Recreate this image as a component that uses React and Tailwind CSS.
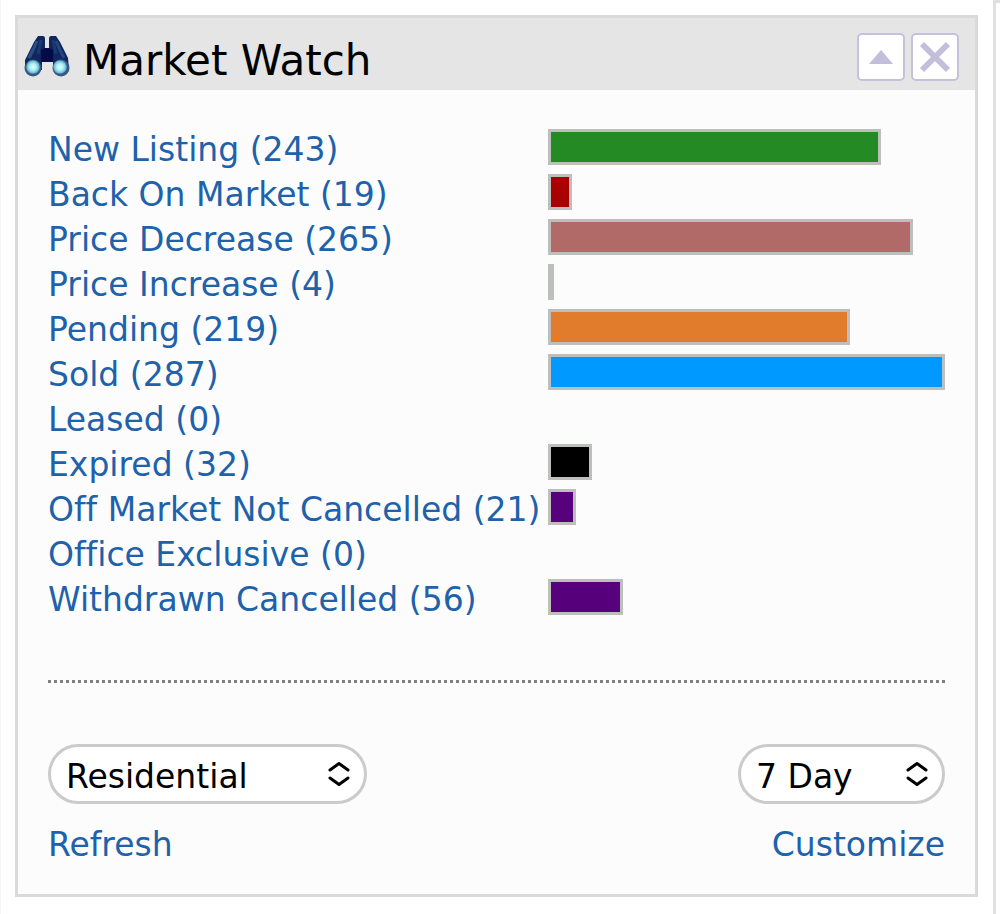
import { useState } from 'react'

const statuses = [
  { label: 'New Listing', count: 243, color: 'bg-[#248a24]' },
  { label: 'Back On Market', count: 19, color: 'bg-[#a90000]' },
  { label: 'Price Decrease', count: 265, color: 'bg-[#b16a68]' },
  { label: 'Price Increase', count: 4, color: 'bg-[#bac1bb]' },
  { label: 'Pending', count: 219, color: 'bg-[#e07c2c]' },
  { label: 'Sold', count: 287, color: 'bg-[#0099ff]' },
  { label: 'Leased', count: 0, color: 'bg-gray-500' },
  { label: 'Expired', count: 32, color: 'bg-black' },
  { label: 'Off Market Not Cancelled', count: 21, color: 'bg-[#57007b]' },
  { label: 'Office Exclusive', count: 0, color: 'bg-gray-500' },
  { label: 'Withdrawn Cancelled', count: 56, color: 'bg-[#57007b]' },
]

const max = Math.max(...statuses.map((s) => s.count))

function Binoculars() {
  return (
    <svg viewBox="0 0 46 42" className="w-[46px] h-[42px] shrink-0" aria-hidden="true">
      <defs>
        <radialGradient id="lens" cx="0.5" cy="0.5" r="0.5">
          <stop offset="0" stopColor="#e4ffff" />
          <stop offset="0.5" stopColor="#a9eef5" />
          <stop offset="0.85" stopColor="#6bbccd" />
          <stop offset="1" stopColor="#3f7a9f" />
        </radialGradient>
      </defs>
      <path d="M14 0 H19 Q21 0 21 3 V12 H25 V3 Q25 0 27 0 H32 L36 6 L40 14 L44 22 L45 34 L29 34 V26 H18 V34 L1 34 L1 24 L6 14 L10 6 Z" fill="#10265c" />
      <path d="M13 5 L9 14 L5 22" stroke="#2b5089" strokeWidth="3" fill="none" />
      <path d="M32 5 L36 14 L40 22" stroke="#244680" strokeWidth="3" fill="none" />
      <path d="M17 4 L14 18 M29 4 L32 18" stroke="#1a3a74" strokeWidth="3" />
      <path d="M17 14 L21 12 H25 L29 14 V26 H17 Z" fill="#050b48" />
      <circle cx="9" cy="32" r="8.5" fill="#3a5688" />
      <circle cx="37" cy="32" r="8.5" fill="#3a5688" />
      <circle cx="9" cy="31" r="7" fill="url(#lens)" />
      <circle cx="36" cy="31" r="7" fill="url(#lens)" />
    </svg>
  )
}

function HeaderButton({ label, children }) {
  return (
    <button
      type="button"
      aria-label={label}
      className="w-[48px] h-[48px] bg-white border-2 border-[#c6c0df] rounded-[5px] flex items-center justify-center"
    >
      {children}
    </button>
  )
}

function Select({ label, options, className }) {
  const [value, setValue] = useState(options[0])

  return (
    <div className={`relative ${className}`}>
      <select
        aria-label={label}
        value={value}
        onChange={(e) => setValue(e.target.value)}
        className="appearance-none w-full h-[60px] pl-[15px] pr-12 pt-[6px] rounded-full border-3 border-[#cbcbcb] bg-white text-black"
      >
        {options.map((o) => (
          <option key={o}>{o}</option>
        ))}
      </select>
      <svg
        viewBox="0 0 24 26"
        className="absolute right-4 top-[17px] w-6 h-[26px] pointer-events-none"
        fill="none"
        stroke="#000"
        strokeWidth="3"
        strokeLinecap="round"
        strokeLinejoin="round"
        aria-hidden="true"
      >
        <path d="M3 9 L12 2.5 L21 9 M3 17 L12 23.5 L21 17" />
      </svg>
    </div>
  )
}

export default function App() {
  return (
    <div className="min-h-screen flex bg-white border-l border-[#f5f5f5] font-['Verdana','DejaVu_Sans',sans-serif] text-[33px] leading-[42px] [font-variant-ligatures:none]">
      <section className="flex-1 self-start ml-[14px] mt-[15px] mb-4 border-3 border-[#dadada] bg-[#fcfcfc]">
        <header className="h-[72px] pl-[6px] pr-4 pt-[6px] flex items-center bg-[#e5e5e5]">
          <Binoculars />
          <h1 className="flex-1 pl-[13px] pt-2 text-[42px] text-black">Market Watch</h1>
          <div className="flex gap-[6px]">
            <HeaderButton label="Collapse">
              <svg viewBox="0 0 26 16" className="w-[26px] h-4" aria-hidden="true">
                <path d="M13 1 L25 15 H1 Z" fill="#c4bedd" />
              </svg>
            </HeaderButton>
            <HeaderButton label="Close">
              <svg viewBox="0 0 32 32" className="w-8 h-8" aria-hidden="true">
                <path d="M3 3 L29 29 M29 3 L3 29" stroke="#c4bedd" strokeWidth="6" />
              </svg>
            </HeaderButton>
          </div>
        </header>

        <div className="px-[30px] pt-[39px] pb-7">
          <ul>
            {statuses.map((s) => (
              <li key={s.label} className="h-[45px] grid grid-cols-[500px_1fr] items-start">
                <a href="#" className="text-[#1d62ab] whitespace-nowrap">
                  {s.label} ({s.count})
                </a>
                {s.count > 0 && (
                  <div
                    className={`h-9 min-w-[6px] border-3 border-[#bdbfbd] ${s.color}`}
                    style={{ width: `${Math.floor((s.count / max) * 100)}%` }}
                  />
                )}
              </li>
            ))}
          </ul>

          <hr className="mt-14 border-t-3 border-dotted border-[#808080]" />

          <div className="mt-[61px] flex justify-between">
            <Select
              label="Property type"
              options={['Residential', 'Condo', 'Land']}
              className="w-[319px]"
            />
            <Select label="Period" options={['7 Day', '14 Day', '30 Day']} className="w-[207px]" />
          </div>

          <div className="mt-5 flex justify-between text-[#1d62ab]">
            <a href="#">Refresh</a>
            <a href="#">Customize</a>
          </div>
        </div>
      </section>

      {/* edge of the next column */}
      <aside className="ml-[15px] w-[7px] border-l-3 border-t-3 border-[#e0e0e0]" />
    </div>
  )
}
